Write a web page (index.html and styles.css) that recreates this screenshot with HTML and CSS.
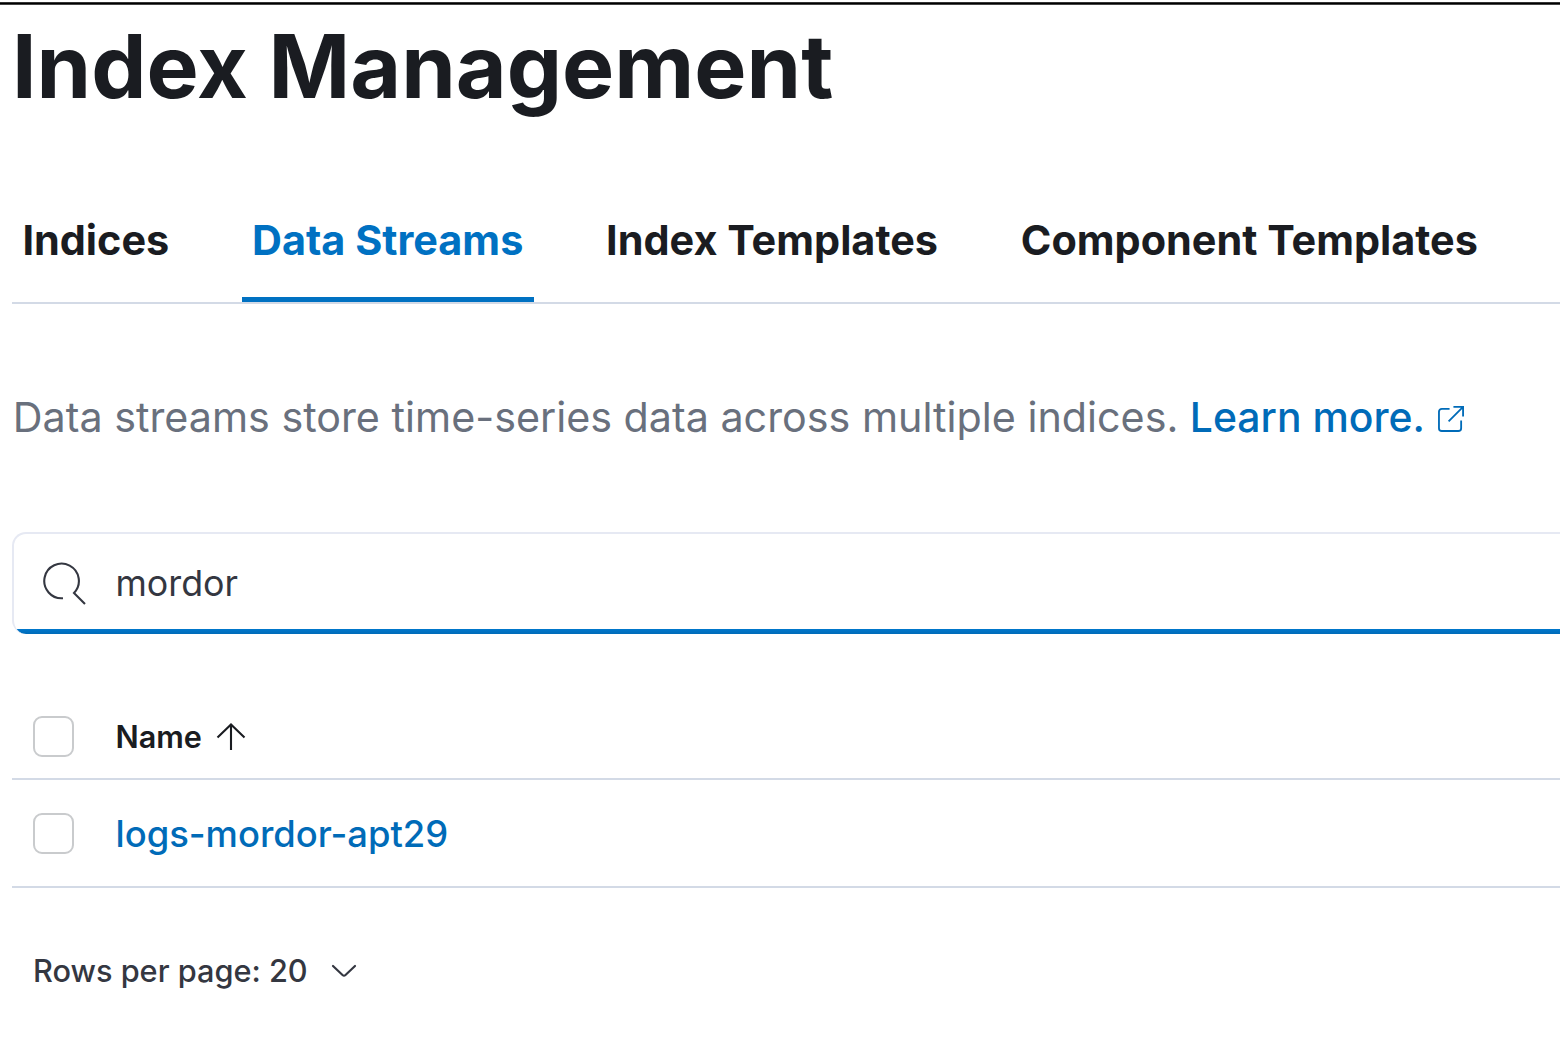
FILE: index.html
```html
<!DOCTYPE html>
<html lang="en">
<head>
<meta charset="utf-8">
<title>Index Management</title>
<link rel="stylesheet" href="styles.css">
</head>
<body>
<div class="top-line"></div>
<main class="page">
  <h1 class="title">Index Management</h1>
  <nav class="tabs">
    <a class="tab">Indices</a>
    <a class="tab tab-active">Data Streams</a>
    <a class="tab">Index Templates</a>
    <a class="tab">Component Templates</a>
  </nav>
  <p class="intro"><span>Data streams store time-series data across multiple indices.</span> <a class="learn">Learn more.</a>
    <svg class="external" viewBox="0 0 28 28"><path d="M12 4H4a3 3 0 0 0-3 3v17a3 3 0 0 0 3 3h17a3 3 0 0 0 3-3v-8M16 2h10v10M26 2 11 17"/></svg>
  </p>
  <div class="search">
    <svg class="magnifier" viewBox="0 0 44 44"><path d="M20 37.200A17.300 17.300 0 1 1 31 32L42 43"/></svg>
    <span class="query">mordor</span>
  </div>
  <section class="table">
    <div class="row header"><span class="checkbox"></span><span class="name">Name</span>
      <svg class="arrow" viewBox="0 0 30 30"><path d="M15 28V3M1.500 15.500 15 2.500l13.500 13"/></svg>
    </div>
    <div class="row item"><span class="checkbox"></span><a class="stream">logs-mordor-apt29</a></div>
  </section>
  <footer class="pager"><span>Rows per page: 20</span>
    <svg class="chevron" viewBox="0 0 26 16"><path d="M2 3l9.500 9q1.500 1.200 3 0L24 3"/></svg>
  </footer>
</main>
</body>
</html>
```
FILE: styles.css
```css
* { box-sizing: border-box; }
body { margin: 0; background: #fff; font-family: Inter, sans-serif; color: #1a1c21; overflow: hidden; }
.top-line { height: 3px; margin-top: 2px; background: linear-gradient(#333 1px, #000 1px 2px, #444 2px); }
.page { height: 1040px; padding-left: 12px; }
svg { fill: none; stroke: currentColor; flex: none; }
.title { margin: 0; height: 172px; padding-top: 5px; font-size: 87.7px; line-height: 112px; font-weight: 700; white-space: nowrap; }
.tabs { display: flex; gap: 62px; height: 127px; border-bottom: 2px solid #d3dae6; }
.tab { height: 125px; padding: 38px 10.4px 0; font-size: 41.4px; line-height: 50px; font-weight: 700; white-space: nowrap; }
.tab-active { color: #0071c2; border-bottom: 5px solid #0071c2; }
.intro { display: flex; align-items: center; margin: 88px 0 0; height: 50px; padding-left: 0.8px; font-size: 41.25px; color: #69707d; white-space: nowrap; }
.learn { color: #006bb8; font-size: 40.9px; font-weight: 500; margin-left: 11.5px; }
.external { width: 27px; height: 27px; margin: 3px 0 0 13.5px; color: #006bb8; stroke-width: 1.9; }
.search { display: flex; align-items: center; height: 102px; margin: 90px -20px 0 0; padding: 0 0 3px 29px; border: 2px solid #e6e9f3; border-bottom: 0; border-radius: 14px; background: linear-gradient(#0077cc, #006bb8) bottom / 100% 5px no-repeat; }
.magnifier { width: 44px; height: 44px; stroke-width: 2.1; color: #343741; }
.query { margin-left: 28.5px; font-size: 35.8px; color: #343741; }
.table { margin-top: 61px; }
.row { display: flex; align-items: center; padding-left: 21px; border-bottom: 2px solid #d3dae6; }
.header { height: 85px; }
.item { height: 108px; }
.checkbox { width: 41px; height: 41px; margin-right: 41.5px; border: 2px solid #c9cbcd; border-radius: 9px; }
.name { margin-top: -1px; font-size: 30.6px; font-weight: 600; }
.arrow { width: 30px; height: 30px; margin: 1px 0 0 14.5px; stroke-width: 2.1; }
.stream { margin-top: 1px; color: #006bb8; font-size: 36.4px; font-weight: 500; }
.pager { display: flex; align-items: center; height: 50px; margin-top: 57px; padding-left: 21px; font-size: 30.7px; font-weight: 500; color: #343741; }
.chevron { width: 26px; height: 16px; margin: 2px 0 0 23.5px; stroke-width: 2.2; stroke-linecap: round; }
```
